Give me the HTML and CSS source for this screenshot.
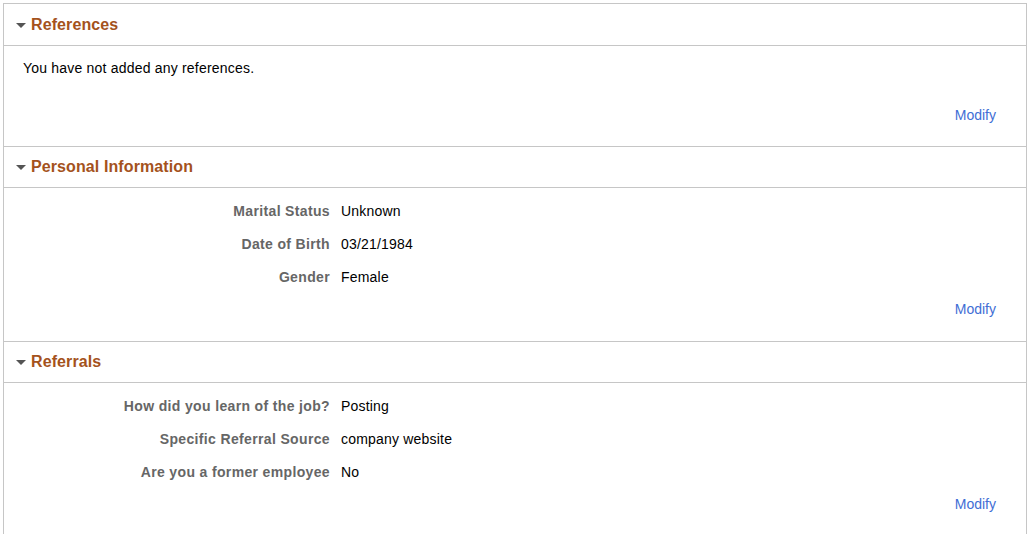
FILE: index.html
```html
<!DOCTYPE html>
<html>
<head>
<meta charset="utf-8">
<link rel="stylesheet" href="styles.css">
</head>
<body>
<div class="page">
  <section class="sec">
    <div class="sec-head sec-head-first"><span class="caret"></span><h2>References</h2></div>
    <div class="sec-body sec-body-msg">
      <p class="msg">You have not added any references.</p>
      <div class="actions actions-msg"><a class="modify" href="#">Modify</a></div>
    </div>
  </section>
  <section class="sec">
    <div class="sec-head"><span class="caret"></span><h2>Personal Information</h2></div>
    <div class="sec-body">
      <div class="fields">
        <div class="lbl">Marital Status</div><div class="val">Unknown</div>
        <div class="lbl">Date of Birth</div><div class="val">03/21/1984</div>
        <div class="lbl">Gender</div><div class="val">Female</div>
      </div>
      <div class="actions"><a class="modify" href="#">Modify</a></div>
    </div>
  </section>
  <section class="sec">
    <div class="sec-head"><span class="caret"></span><h2>Referrals</h2></div>
    <div class="sec-body">
      <div class="fields">
        <div class="lbl">How did you learn of the job?</div><div class="val">Posting</div>
        <div class="lbl">Specific Referral Source</div><div class="val">company website</div>
        <div class="lbl">Are you a former employee</div><div class="val">No</div>
      </div>
      <div class="actions"><a class="modify" href="#">Modify</a></div>
    </div>
  </section>
</div>
</body>
</html>
```
FILE: styles.css
```css
html, body {
  margin: 0;
  padding: 0;
  background: #fff;
}
body {
  font-family: "Liberation Sans", Arial, sans-serif;
  font-size: 14px;
  color: #000;
}
.page {
  margin: 3px 0 0 3px;
  width: 1024px;
  box-sizing: border-box;
  border-left: 1px solid #c6c6c6;
  border-right: 1px solid #c6c6c6;
  min-height: 531px;
}
.sec {
  border-top: 1px solid #c6c6c6;
}
.sec-head {
  height: 40px;
  border-bottom: 1px solid #c6c6c6;
  display: flex;
  align-items: center;
  padding-left: 12px;
}
.sec-head-first {
  height: 41px;
}
.caret {
  width: 0;
  height: 0;
  border-left: 5px solid transparent;
  border-right: 5px solid transparent;
  border-top: 5px solid #555;
  margin-right: 5px;
  margin-top: 1px;
}
.sec-head h2 {
  margin: 0;
  font-size: 16px;
  font-weight: bold;
  color: #a4521c;
  line-height: 18px;
  letter-spacing: 0.1px;
}
.sec-body {
  padding: 6px 30px 24px 0;
}
.sec-body-msg {
  padding: 14px 30px 23px 0;
}
.msg {
  margin: 0 0 0 19px;
  line-height: 16px;
  letter-spacing: 0.2px;
}
.fields {
  display: grid;
  grid-template-columns: 326px 1fr;
  column-gap: 11px;
  grid-auto-rows: 33px;
  align-items: center;
}
.lbl {
  text-align: right;
  font-weight: bold;
  color: #666;
  letter-spacing: 0.35px;
}
.val {
  color: #000;
  letter-spacing: 0.2px;
}
.actions {
  display: flex;
  justify-content: flex-end;
  margin-top: 8px;
  line-height: 16px;
}
.actions-msg {
  margin-top: 31px;
}
.modify {
  color: #3f6ed5;
  text-decoration: none;
}
```
